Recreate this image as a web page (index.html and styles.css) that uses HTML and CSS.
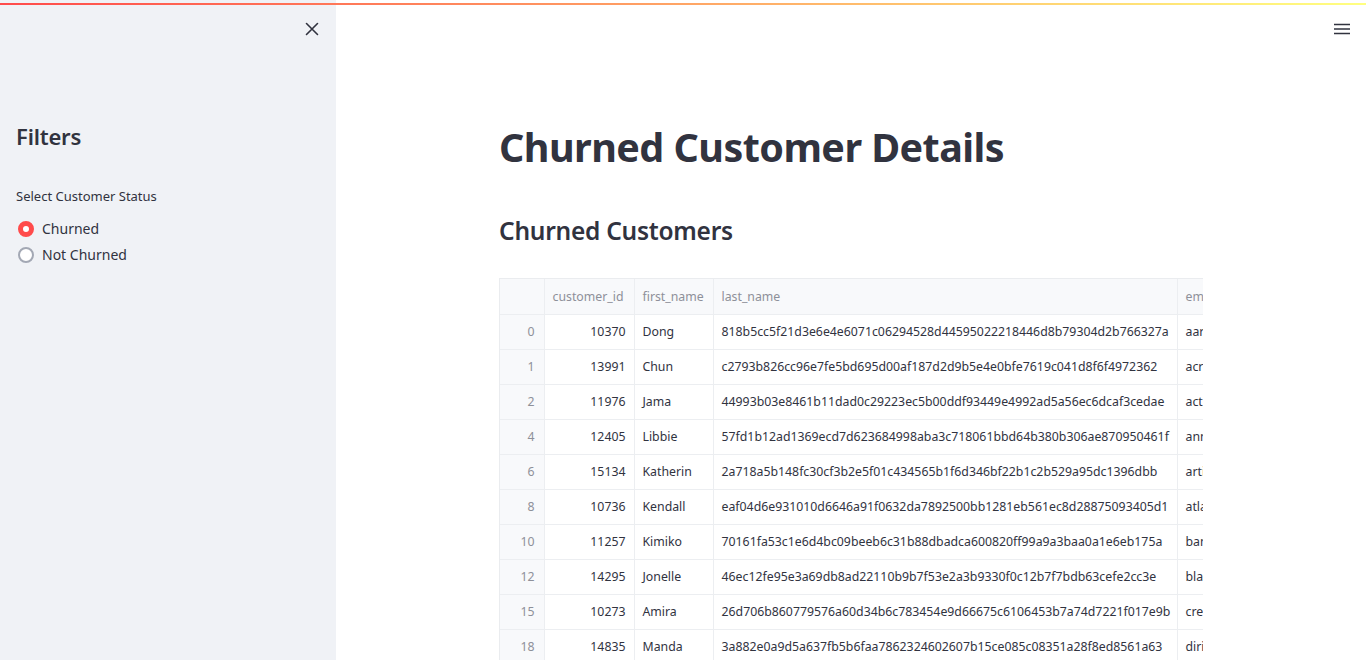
FILE: index.html
```html
<!DOCTYPE html>
<html lang="en">
<head>
<meta charset="utf-8">
<title>Churned Customer Details</title>
<link rel="stylesheet" href="styles.css">
</head>
<body>
<div class="decoration"></div>
<div class="app">
  <aside class="sidebar">
    <div class="sidebar-top">
      <button class="icon-btn close-btn" aria-label="Close sidebar">
        <svg width="14" height="14" viewBox="0 0 14 14"><path d="M1.5 1.5 L12.5 12.5 M12.5 1.5 L1.5 12.5" stroke="#31333f" stroke-width="1.6" stroke-linecap="round"/></svg>
      </button>
    </div>
    <div class="sidebar-content">
      <h2 class="sidebar-title">Filters</h2>
      <div class="radio-group">
        <div class="radio-label">Select Customer Status</div>
        <label class="radio-option"><span class="radio-dot checked"></span><span>Churned</span></label>
        <label class="radio-option"><span class="radio-dot"></span><span>Not Churned</span></label>
      </div>
    </div>
  </aside>
  <main class="main">
    <header class="toolbar">
      <button class="icon-btn menu-btn" aria-label="Menu">
        <svg width="16" height="12" viewBox="0 0 16 12"><path d="M0 1.5H16M0 6H16M0 10.5H16" stroke="#31333f" stroke-width="1.6"/></svg>
      </button>
    </header>
    <div class="block">
      <h1 class="title">Churned Customer Details</h1>
      <h3 class="subheader">Churned Customers</h3>
      <div class="grid-wrap">
        <table class="grid">
          <colgroup>
            <col class="c-idx"><col class="c-id"><col class="c-first"><col class="c-last"><col class="c-email">
          </colgroup>
          <thead>
            <tr><th></th><th>customer_id</th><th>first_name</th><th>last_name</th><th>email</th></tr>
          </thead>
          <tbody>
            <tr><td class="idx">0</td><td class="num">10370</td><td>Dong</td><td>818b5cc5f21d3e6e4e6071c06294528d44595022218446d8b79304d2b766327a</td><td>aaron.dong@example.com</td></tr>
            <tr><td class="idx">1</td><td class="num">13991</td><td>Chun</td><td>c2793b826cc96e7fe5bd695d00af187d2d9b5e4e0bfe7619c041d8f6f4972362</td><td>acrimony@example.com</td></tr>
            <tr><td class="idx">2</td><td class="num">11976</td><td>Jama</td><td>44993b03e8461b11dad0c29223ec5b00ddf93449e4992ad5a56ec6dcaf3cedae</td><td>actuary@example.com</td></tr>
            <tr><td class="idx">4</td><td class="num">12405</td><td>Libbie</td><td>57fd1b12ad1369ecd7d623684998aba3c718061bbd64b380b306ae870950461f</td><td>annex@example.com</td></tr>
            <tr><td class="idx">6</td><td class="num">15134</td><td>Katherin</td><td>2a718a5b148fc30cf3b2e5f01c434565b1f6d346bf22b1c2b529a95dc1396dbb</td><td>artisan@example.com</td></tr>
            <tr><td class="idx">8</td><td class="num">10736</td><td>Kendall</td><td>eaf04d6e931010d6646a91f0632da7892500bb1281eb561ec8d28875093405d1</td><td>atlas@example.com</td></tr>
            <tr><td class="idx">10</td><td class="num">11257</td><td>Kimiko</td><td>70161fa53c1e6d4bc09beeb6c31b88dbadca600820ff99a9a3baa0a1e6eb175a</td><td>banner@example.com</td></tr>
            <tr><td class="idx">12</td><td class="num">14295</td><td>Jonelle</td><td>46ec12fe95e3a69db8ad22110b9b7f53e2a3b9330f0c12b7f7bdb63cefe2cc3e</td><td>blazer@example.com</td></tr>
            <tr><td class="idx">15</td><td class="num">10273</td><td>Amira</td><td>26d706b860779576a60d34b6c783454e9d66675c6106453b7a74d7221f017e9b</td><td>crescent@example.com</td></tr>
            <tr><td class="idx">18</td><td class="num">14835</td><td>Manda</td><td>3a882e0a9d5a637fb5b6faa7862324602607b15ce085c08351a28f8ed8561a63</td><td>dirigible@example.com</td></tr>
          </tbody>
        </table>
      </div>
    </div>
  </main>
</div>
</body>
</html>
```

FILE: styles.css
```css
* { box-sizing: border-box; }
html, body {
  margin: 0;
  padding: 0;
  height: 100%;
  overflow: hidden;
  background: #ffffff;
  color: #31333f;
  font-family: "Source Sans Pro", "Noto Sans", "Liberation Sans", sans-serif;
}
.decoration {
  position: fixed;
  top: 3px;
  left: 0;
  right: 0;
  height: 2px;
  background: linear-gradient(90deg, #ff4b4b, #ffff80);
  z-index: 10;
}
.app {
  display: flex;
  height: 100vh;
}
.sidebar {
  width: 336px;
  flex: 0 0 336px;
  background: #f0f2f6;
  height: 100%;
}
.sidebar-top {
  display: flex;
  justify-content: flex-end;
  padding: 15px 10px 0 0;
}
.icon-btn {
  background: none;
  border: 0;
  padding: 0;
  width: 28px;
  height: 28px;
  display: flex;
  align-items: center;
  justify-content: center;
  cursor: pointer;
}
.sidebar-content {
  padding: 77px 16px 0 16px;
}
.sidebar-title {
  margin: 0;
  font-size: 22px;
  font-weight: 600;
  line-height: 32px;
  letter-spacing: -0.2px;
}
.radio-group {
  margin-top: 35px;
}
.radio-label {
  font-size: 13px;
  line-height: 18px;
  margin-bottom: 11px;
}
.radio-option {
  display: flex;
  align-items: center;
  gap: 8px;
  font-size: 14px;
  line-height: 26px;
  height: 26px;
  padding-left: 2px;
}
.radio-dot {
  width: 16px;
  height: 16px;
  border-radius: 50%;
  border: 2px solid #a3a8b4;
  background: #fff;
  flex: 0 0 16px;
}
.radio-dot.checked {
  border: 5px solid #ff4b4b;
  background: #fff;
}
.main {
  flex: 1;
  display: flex;
  flex-direction: column;
  align-items: center;
  position: relative;
}
.toolbar {
  align-self: stretch;
  display: flex;
  justify-content: flex-end;
  padding: 15px 10px 0 0;
  height: 43px;
}
.block {
  width: 704px;
  padding-top: 80px;
}
.title {
  margin: 0;
  font-size: 39.5px;
  font-weight: 700;
  line-height: 48px;
  letter-spacing: -0.55px;
}
.subheader {
  margin: 42px 0 0 0;
  font-size: 24.5px;
  font-weight: 600;
  line-height: 36px;
  letter-spacing: -0.25px;
}
.grid-wrap {
  margin-top: 29px;
  width: 704px;
  overflow: hidden;
  border: 1px solid #eaecef;
  border-right: 0;
}
.grid {
  border-collapse: collapse;
  table-layout: fixed;
  width: 760px;
  font-size: 12.3px;
}
.c-idx { width: 44px; }
.c-id { width: 90px; }
.c-first { width: 79px; }
.c-last { width: 464px; }
.c-email { width: 83px; }
.grid th, .grid td {
  border-right: 1px solid #eceef1;
  border-bottom: 1px solid #eceef1;
  padding: 0 8px;
  white-space: nowrap;
  overflow: hidden;
  text-align: left;
}
.grid th {
  height: 35px;
  background: #f8f9fb;
  color: #8e9099;
  font-weight: 400;
}
.grid td {
  height: 35px;
  color: #31333f;
}
.grid td.idx {
  background: #f8f9fb;
  color: #8e9099;
  text-align: right;
  padding-right: 9px;
}
.grid td.num {
  text-align: right;
}
```
